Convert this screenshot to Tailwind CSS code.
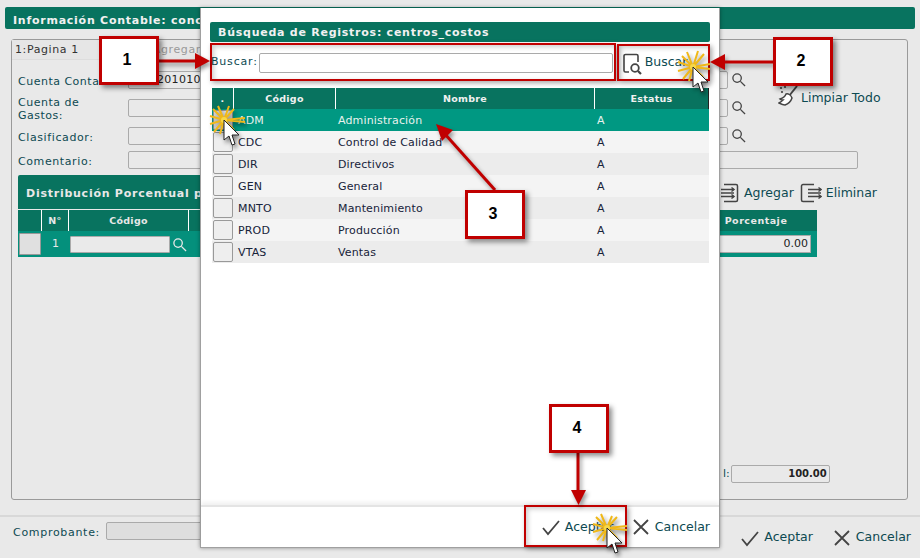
<!DOCTYPE html>
<html lang="es">
<head>
    <meta charset="UTF-8">
    <title>Información Contable</title>
    <script src="https://cdn.jsdelivr.net/npm/@tailwindcss/browser@4"></script>
</head>
<body class="relative w-[920px] h-[558px] overflow-hidden bg-[#e9e9e9] font-['DejaVu_Sans',sans-serif] text-[11px] text-[#0d4a52]">

    <!-- Pantalla de fondo -->
    <div class="flex flex-col h-full pt-[7px]">
        <div class="mx-[5px] h-[22px] rounded-[2px] bg-[#08735f] pl-[8px] leading-[27px] font-bold text-[11px] tracking-[0.75px] text-[#f1f1f1]">Información Contable: conc</div>

        <div class="mt-[10px] mx-[11px] h-[461px] w-[897px] shrink-0 border border-[#9a9a9a] rounded-[3px] relative">
            <div class="h-[20px] flex items-center bg-[#e6e6e6] text-[#333] w-[190px] pl-[3px] pt-[2px] gap-[74px] border-b border-[#ddd] tracking-[0.6px]">
                <span>1:Pagina 1</span><span class="text-[#9a9a9a]">Agregar</span>
            </div>

            <div class="pl-[6px] pr-[6px] pt-[11px] flex flex-col">
                <div class="flex h-[28px]">
                    <span class="w-[110px] pt-[3px] tracking-[0.5px] whitespace-nowrap overflow-hidden">Cuenta Contable:</span>
                    <div class="w-[600px] h-[18px] border border-[#aaa] rounded-[2px] pl-[28px] text-[#222] leading-[16px] tracking-[0.3px]">2010101</div>
                    <svg class="w-[15px] h-[15px] ml-[3px] mt-[1px]" viewBox="0 0 16 16" fill="none" stroke="#444" stroke-width="1.4"><circle cx="6.500" cy="6.500" r="4.500"/><path d="M10 10l5 5"/></svg>
                </div>
                <div class="flex h-[28px]">
                    <span class="w-[110px] leading-[13px] -mt-[3px] tracking-[0.5px]">Cuenta de<br>Gastos:</span>
                    <div class="w-[600px] h-[18px] border border-[#aaa] rounded-[2px]"></div>
                    <svg class="w-[15px] h-[15px] ml-[3px] mt-[1px]" viewBox="0 0 16 16" fill="none" stroke="#444" stroke-width="1.4"><circle cx="6.500" cy="6.500" r="4.500"/><path d="M10 10l5 5"/></svg>
                </div>
                <div class="flex h-[24px]">
                    <span class="w-[110px] pt-[3px] tracking-[0.6px]">Clasificador:</span>
                    <div class="w-[600px] h-[18px] border border-[#aaa] rounded-[2px]"></div>
                    <svg class="w-[15px] h-[15px] ml-[3px] mt-[1px]" viewBox="0 0 16 16" fill="none" stroke="#444" stroke-width="1.4"><circle cx="6.500" cy="6.500" r="4.500"/><path d="M10 10l5 5"/></svg>
                </div>
                <div class="flex h-[24px]">
                    <span class="w-[110px] pt-[3px] tracking-[0.6px]">Comentario:</span>
                    <div class="w-[730px] h-[18px] border border-[#aaa] rounded-[2px]"></div>
                </div>

                <div class="h-[34px] rounded-t-[2px] bg-[#08735f] pl-[8px] pt-[12px] leading-[14px] font-bold tracking-[0.75px] text-[#e8e8e8] w-[500px]">Distribución Porcentual por</div>
                <div class="mt-[1px] grid grid-cols-[23px_27px_120px_1fr_122px] w-[799px] h-[21px] bg-[#08735f] text-[#e8e8e8] font-bold text-[9.5px] leading-[21px] text-center tracking-[0.3px]">
                    <span></span><span class="border-l border-white">N°</span><span class="border-l border-white">Código</span><span class="border-l border-white"></span><span class="tracking-[0.5px]">Porcentaje</span>
                </div>
                <div class="flex items-center w-[799px] h-[26px] bg-[#04907c] text-[#e8e8e8]">
                    <div class="ml-[1px] w-[22px] h-[22px] bg-[#e0e0e0] border border-[#999] rounded-[1px]"></div>
                    <span class="w-[29px] text-center">1</span>
                    <div class="w-[100px] h-[17px] bg-[#eaeaea] border border-[#aaa] rounded-[1px]"></div>
                    <svg class="w-[15px] h-[15px] ml-[2px]" viewBox="0 0 16 16" fill="none" stroke="#e8e8e8" stroke-width="1.4"><circle cx="6.500" cy="6.500" r="4.500"/><path d="M10 10l5 5"/></svg>
                    <div class="ml-auto mr-[6px] w-[100px] h-[18px] bg-[#eaeaea] border border-[#aaa] text-[#222] text-right pr-[2px] leading-[16px]">0.00</div>
                </div>
            </div>

            <!-- Acciones sobre la tabla y total -->
            <div class="absolute left-[708px] top-[143px] flex items-center text-[12.5px]">
                <svg class="w-[19px] h-[20px]" viewBox="0 0 19 20" fill="none" stroke="#444" stroke-width="1.500"><path d="M4 1.500h12a1.500 1.500 0 0 1 1.500 1.500v14a1.500 1.500 0 0 1-1.500 1.500H4M1 6.500h13M1 10h13M1 13.500h13"/><path d="M11.500 4.500l2.500 2-2.500 2M11.500 11.500l2.500 2-2.500 2"/></svg>
                <span class="ml-[5px]">Agregar</span>
                <svg class="ml-[6px] w-[22px] h-[20px]" viewBox="0 0 22 20" fill="none" stroke="#444" stroke-width="1.500"><path d="M14 1.500H3A1.500 1.500 0 0 0 1.500 3v14A1.500 1.500 0 0 0 3 18.500h11M8 6.500h13M8 10h13M8 13.500h13"/><path d="M18.500 4.500l2.500 2-2.500 2M18.500 11.500l2.500 2-2.500 2"/></svg>
                <span class="ml-[4px]">Eliminar</span>
            </div>
            <div class="absolute left-[766px] top-[45px] flex items-start gap-[3px] text-[12.5px]">
                <svg class="w-[20px] h-[21px]" viewBox="0 0 20 21"><path d="M19 1l-8 10" fill="none" stroke="#444" stroke-width="2"/><path d="M8 9c2-1 5 1 6 4-1 3-4 6-7 7-2 0-4-1-6-2 2-1 3-2 4-3-1 0-2 0-3-1 3-1 5-2 6-5z" fill="#fff" stroke="#444" stroke-width="1.500"/><circle cx="3" cy="3" r="1.100" fill="#444"/><circle cx="7" cy="2" r="1.100" fill="#444"/><circle cx="4" cy="7" r="1.100" fill="#444"/></svg>
                <span class="mt-[4px]">Limpiar Todo</span>
            </div>
            <div class="absolute left-[711px] top-[425px] flex items-center gap-[1px]">
                <span>l:</span>
                <div class="w-[99px] h-[18px] border border-[#aaa] rounded-[2px] text-right pr-[2px] font-bold text-[10px] text-[#222] leading-[16px]">100.00</div>
            </div>
        </div>

        <div class="mt-[15px] border-t-2 border-[#d8d8d8] flex-1 flex items-center pl-[13px]">
            <span class="self-start mt-[8px] tracking-[0.7px]">Comprobante:</span>
            <div class="self-start mt-[5px] ml-[6px] w-[300px] h-[18px] bg-[#dedede] border border-[#aaa] rounded-[2px]"></div>
            <div class="ml-auto flex items-center gap-[20px] pr-[9px] text-[12.5px]">
                <span class="flex items-center gap-[4px]"><svg class="w-[20px] h-[20px]" viewBox="0 0 20 20" fill="none" stroke="#444" stroke-width="1.800"><path d="M2 11l5 6L18 4"/></svg>Aceptar</span>
                <span class="flex items-center gap-[5px]"><svg class="w-[18px] h-[18px]" viewBox="0 0 18 18" fill="none" stroke="#444" stroke-width="1.800"><path d="M2 2l14 14M16 2L2 16"/></svg>Cancelar</span>
            </div>
        </div>
    </div>

    <!-- Ventana de búsqueda -->
    <div class="absolute left-[200px] top-[8px] w-[520px] h-[540px] bg-white border border-[#a0a0a0] border-t-0 shadow-[0_0_4px_rgba(0,0,0,0.4)] flex flex-col">
        <div class="mt-[14px] mx-[9px] h-[20px] rounded-[2px] bg-[#08735f] pl-[8px] font-bold leading-[21px] tracking-[0.75px] text-[#f1f1f1]">Búsqueda de Registros: centros_costos</div>

        <div class="flex items-center h-[37px] mt-[2px] ml-[10px] text-[11px]">
            <span class="tracking-[0.8px]">Buscar:</span>
            <div class="ml-[1px] w-[354px] h-[20px] border border-[#aaa] rounded-[2px]"></div>
            <span class="ml-[10px] flex items-center gap-[3px] text-[12.5px]">
                <svg class="w-[19px] h-[22px] mt-[2px]" viewBox="0 0 19 22" fill="none" stroke="#444" stroke-width="1.600"><path d="M6 19H2.500A1.500 1.500 0 0 1 1 17.500V3a1.500 1.500 0 0 1 1.500-1.500h11A1.500 1.500 0 0 1 15 3v6"/><circle cx="12" cy="15" r="3.800" stroke-width="1.800"/><path d="M15 18l3 3" stroke-width="2.200"/></svg>
                Buscar
            </span>
        </div>

        <div class="mt-[7px] ml-[11px] w-[497px]">
            <div class="grid grid-cols-[21px_102px_259px_1fr] h-[21px] bg-[#08735f] text-[#f1f1f1] font-bold text-[9.5px] tracking-[0.25px] leading-[21px] text-center">
                <span>.</span><span class="border-l border-white">Código</span><span class="border-l border-white">Nombre</span><span class="border-l border-white border-r border-r-[#222]">Estatus</span>
            </div>
            <div class="grid grid-cols-[21px_102px_259px_1fr] h-[22px] items-center bg-[#009882] text-[#e8f2ee] pt-[2px] tracking-[0.15px]">
                <div class="ml-[1px] -mt-[2px] w-[20px] h-[20px] bg-[#e4e4e4] border border-[#999] rounded-[2px]"></div><span class="pl-[5px]">ADM</span><span class="pl-[3px]">Administración</span><span class="pl-[3px]">A</span>
            </div>
            <div class="grid grid-cols-[21px_102px_259px_1fr] h-[22px] items-center bg-[#f4f4f4] text-[#17233a] pt-[2px] tracking-[0.15px]">
                <div class="ml-[1px] -mt-[2px] w-[20px] h-[20px] bg-[#eee] border border-[#999] rounded-[2px]"></div><span class="pl-[5px]">CDC</span><span class="pl-[3px]">Control de Calidad</span><span class="pl-[3px]">A</span>
            </div>
            <div class="grid grid-cols-[21px_102px_259px_1fr] h-[22px] items-center bg-[#ececec] text-[#17233a] pt-[2px] tracking-[0.15px]">
                <div class="ml-[1px] -mt-[2px] w-[20px] h-[20px] bg-[#eee] border border-[#999] rounded-[2px]"></div><span class="pl-[5px]">DIR</span><span class="pl-[3px]">Directivos</span><span class="pl-[3px]">A</span>
            </div>
            <div class="grid grid-cols-[21px_102px_259px_1fr] h-[22px] items-center bg-[#f4f4f4] text-[#17233a] pt-[2px] tracking-[0.15px]">
                <div class="ml-[1px] -mt-[2px] w-[20px] h-[20px] bg-[#eee] border border-[#999] rounded-[2px]"></div><span class="pl-[5px]">GEN</span><span class="pl-[3px]">General</span><span class="pl-[3px]">A</span>
            </div>
            <div class="grid grid-cols-[21px_102px_259px_1fr] h-[22px] items-center bg-[#ececec] text-[#17233a] pt-[2px] tracking-[0.15px]">
                <div class="ml-[1px] -mt-[2px] w-[20px] h-[20px] bg-[#eee] border border-[#999] rounded-[2px]"></div><span class="pl-[5px]">MNTO</span><span class="pl-[3px]">Mantenimiento</span><span class="pl-[3px]">A</span>
            </div>
            <div class="grid grid-cols-[21px_102px_259px_1fr] h-[22px] items-center bg-[#f4f4f4] text-[#17233a] pt-[2px] tracking-[0.15px]">
                <div class="ml-[1px] -mt-[2px] w-[20px] h-[20px] bg-[#eee] border border-[#999] rounded-[2px]"></div><span class="pl-[5px]">PROD</span><span class="pl-[3px]">Producción</span><span class="pl-[3px]">A</span>
            </div>
            <div class="grid grid-cols-[21px_102px_259px_1fr] h-[22px] items-center bg-[#ececec] text-[#17233a] pt-[2px] tracking-[0.15px]">
                <div class="ml-[1px] -mt-[2px] w-[20px] h-[20px] bg-[#eee] border border-[#999] rounded-[2px]"></div><span class="pl-[5px]">VTAS</span><span class="pl-[3px]">Ventas</span><span class="pl-[3px]">A</span>
            </div>
        </div>

        <div class="mt-auto h-[42px] border-t-2 border-[#e4e4e4] shadow-[0_-3px_4px_rgba(0,0,0,0.06)] flex items-center justify-end gap-[3px] pr-[9px] text-[12.5px]">
            <span class="flex items-center gap-[4px]"><svg class="w-[20px] h-[20px]" viewBox="0 0 20 20" fill="none" stroke="#444" stroke-width="1.800"><path d="M2 11l5 6L18 4"/></svg><span class="w-[64px]">Aceptar</span></span>
            <span class="flex items-center gap-[5px]"><svg class="w-[18px] h-[18px]" viewBox="0 0 18 18" fill="none" stroke="#444" stroke-width="1.800"><path d="M2 2l14 14M16 2L2 16"/></svg>Cancelar</span>
        </div>
    </div>

    <!-- Anotaciones del tutorial -->
    <div class="absolute left-[210px] top-[43px] w-[406px] h-[38px] border-[2px] border-[#c00000] shadow-[2px_2px_5px_rgba(0,0,0,0.35),inset_2px_2px_5px_rgba(0,0,0,0.2)]"></div>
    <div class="absolute left-[617px] top-[44px] w-[93px] h-[37px] border-[2px] border-[#c00000] shadow-[2px_2px_5px_rgba(0,0,0,0.35),inset_2px_2px_5px_rgba(0,0,0,0.2)]"></div>
    <div class="absolute left-[524px] top-[505px] w-[103px] h-[42px] border-[2px] border-[#c00000] shadow-[2px_2px_5px_rgba(0,0,0,0.35),inset_2px_2px_5px_rgba(0,0,0,0.2)]"></div>

    <svg class="absolute inset-0 w-[920px] h-[558px] drop-shadow-[2px_3px_2px_rgba(0,0,0,0.4)]" viewBox="0 0 920 558" fill="#c00000" stroke="#c00000">
        <path d="M158 61H197" stroke-width="3"/><path d="M195 53l15 8-15 8z" stroke="none"/>
        <path d="M773 62H722" stroke-width="3"/><path d="M725 54l-15 8 15 8z" stroke="none"/>
        <path d="M495 190L444 133" stroke-width="3"/><path d="M436 124l17 6-11 11z" stroke="none"/>
        <path d="M578 452V495" stroke-width="3"/><path d="M571 490h15l-7.500 15z" stroke="none"/>
    </svg>

    <div class="absolute left-[99px] top-[36px] w-[60px] h-[49px] pr-[4px] pb-[2px] bg-white border-[3px] border-[#c00000] shadow-[3px_3px_5px_rgba(0,0,0,0.45)] flex items-center justify-center font-['Liberation_Sans',sans-serif] font-bold text-[16px] text-black">1</div>
    <div class="absolute left-[773px] top-[37px] w-[60px] h-[49px] pr-[4px] pb-[2px] bg-white border-[3px] border-[#c00000] shadow-[3px_3px_5px_rgba(0,0,0,0.45)] flex items-center justify-center font-['Liberation_Sans',sans-serif] font-bold text-[16px] text-black">2</div>
    <div class="absolute left-[465px] top-[190px] w-[60px] h-[49px] pr-[4px] pb-[2px] bg-white border-[3px] border-[#c00000] shadow-[3px_3px_5px_rgba(0,0,0,0.45)] flex items-center justify-center font-['Liberation_Sans',sans-serif] font-bold text-[16px] text-black">3</div>
    <div class="absolute left-[549px] top-[404px] w-[60px] h-[49px] pr-[4px] pb-[2px] bg-white border-[3px] border-[#c00000] shadow-[3px_3px_5px_rgba(0,0,0,0.45)] flex items-center justify-center font-['Liberation_Sans',sans-serif] font-bold text-[16px] text-black">4</div>

    <!-- Clics: destello y cursor -->
    <svg class="absolute left-[207px] top-[103px] w-[50px] h-[50px] drop-shadow-[2px_3px_2px_rgba(0,0,0,0.45)]" viewBox="0 0 50 50">
        <path d="M17 17L6 6M17 17L27 6M17 17L11 3M17 17L22 3M17 17L3 13M17 17L3 21M17 17L38 15M17 17L38 19M17 17L7 29M17 17L27 27M17 17L13 31M17 17L22 31" stroke="#f0b818" stroke-width="2"/>
        <circle cx="17" cy="17" r="3" fill="#f6d84a"/>
        <path d="M17 17v20l5-4 3 9 3-1-3-9 7 0z" fill="#fff" stroke="#222" stroke-width="1"/>
    </svg>
    <svg class="absolute left-[676px] top-[50px] w-[50px] h-[50px] drop-shadow-[2px_3px_2px_rgba(0,0,0,0.45)]" viewBox="0 0 50 50">
        <path d="M17 17L6 6M17 17L28 4M17 17L11 2M17 17L22 1M17 17L2 12M17 17L2 21M17 17L34 14M17 17L34 19M17 17L7 29M17 17L27 27M17 17L13 31M17 17L22 31" stroke="#f0b818" stroke-width="2"/>
        <circle cx="17" cy="17" r="3" fill="#f6d84a"/>
        <path d="M17 17v20l5-4 3 9 3-1-3-9 7 0z" fill="#fff" stroke="#222" stroke-width="1"/>
    </svg>
    <svg class="absolute left-[590px] top-[511px] w-[50px] h-[50px] drop-shadow-[2px_3px_2px_rgba(0,0,0,0.45)]" viewBox="0 0 50 50">
        <path d="M17 17L6 6M17 17L27 6M17 17L11 3M17 17L22 5M17 17L3 13M17 17L3 21M17 17L37 15M17 17L37 19M17 17L7 29M17 17L27 27M17 17L13 30M17 17L22 30" stroke="#f0b818" stroke-width="2"/>
        <circle cx="17" cy="17" r="3" fill="#f6d84a"/>
        <path d="M17 17v20l5-4 3 9 3-1-3-9 7 0z" fill="#fff" stroke="#222" stroke-width="1"/>
    </svg>
</body>
</html>
